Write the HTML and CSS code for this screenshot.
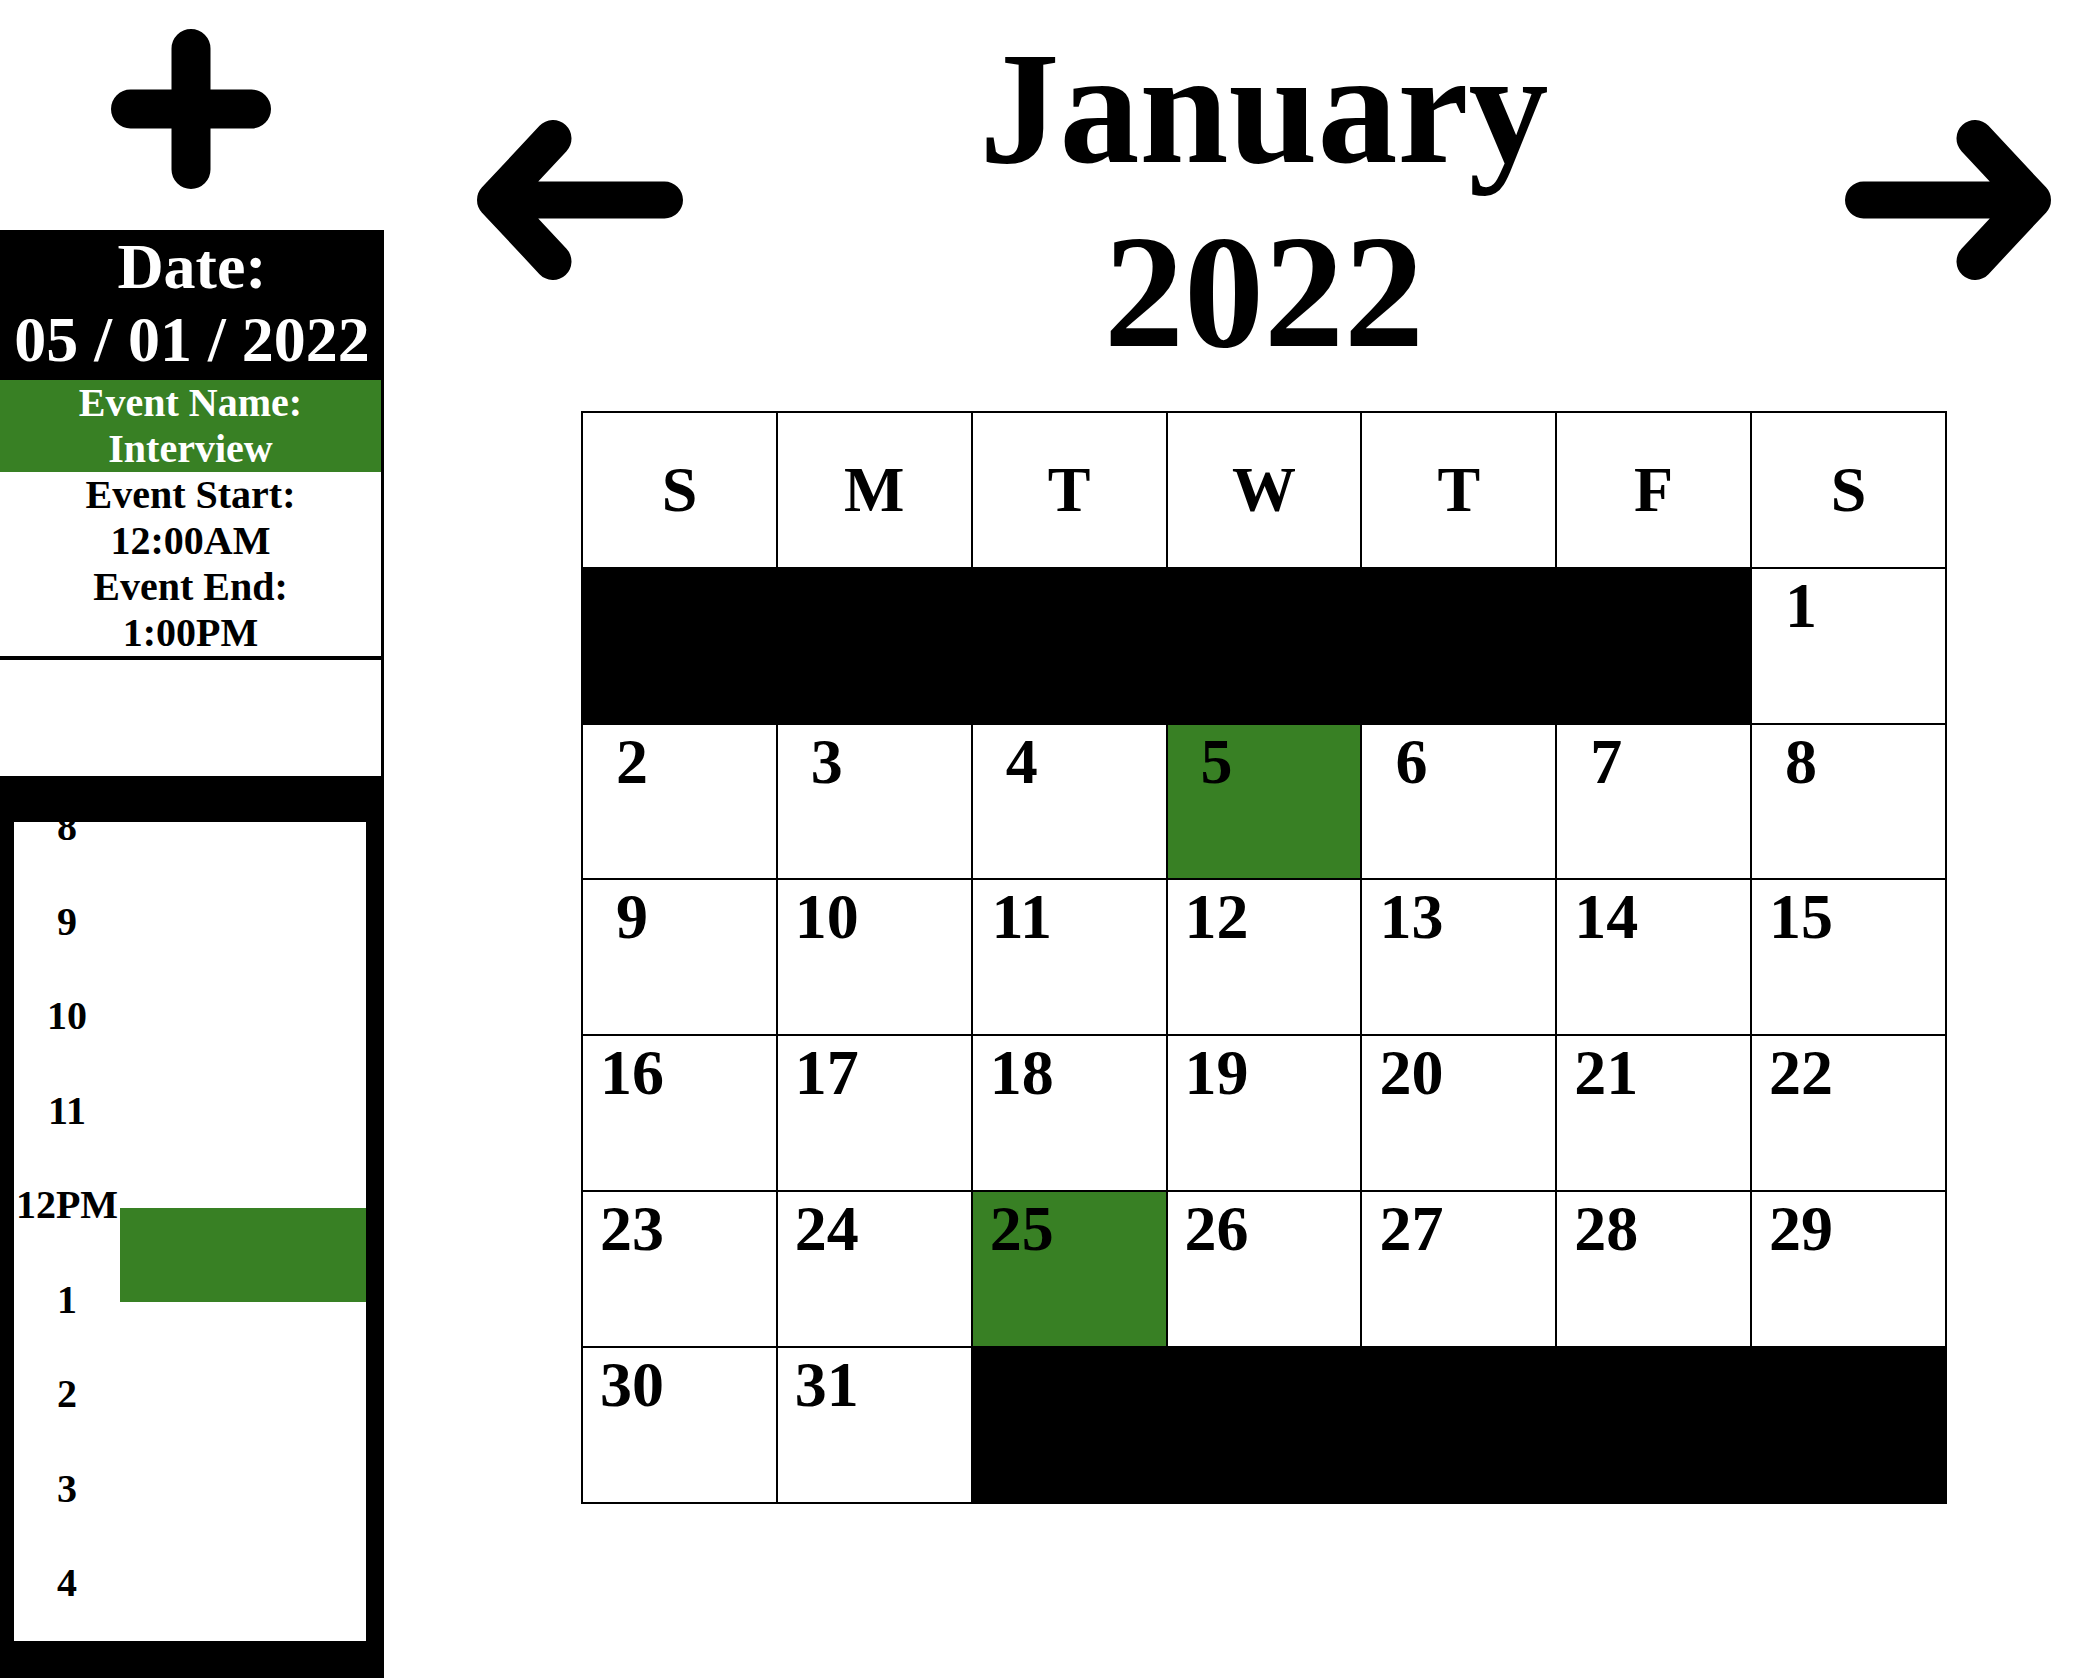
FILE: index.html
```html
<!DOCTYPE html>
<html lang="en">
<head>
  <meta charset="UTF-8">
  <meta name="viewport" content="width=device-width, initial-scale=1.0">
  <title>Calendar</title>
  <link rel="stylesheet" href="styles.css">
</head>
<body>

  <div class="sidebar">
    <div class="add-area">
      <button class="icon-button add-button" title="Add event">
        <svg width="160" height="160" viewBox="0 0 160 160">
          <path d="M19.5 80 H140.5 M80 19.5 V140.5" />
        </svg>
      </button>
    </div>

    <div class="date-head">
      <div>Date:</div>
      <div>05 / 01 / 2022</div>
    </div>

    <div class="event-info">
      <div class="event-name">Event Name:<br>Interview</div>
      <div>Event Start:<br>12:00AM</div>
      <div>Event End:<br>1:00PM</div>
    </div>
    <div class="event-space"></div>

    <div class="schedule">
      <div class="schedule-box">
        <div class="hours">
          <div class="hour"><span>8</span></div>
          <div class="hour"><span>9</span></div>
          <div class="hour"><span>10</span></div>
          <div class="hour"><span>11</span></div>
          <div class="hour"><span>12PM</span><div class="slot-event"></div></div>
          <div class="hour"><span>1</span></div>
          <div class="hour"><span>2</span></div>
          <div class="hour"><span>3</span></div>
          <div class="hour"><span>4</span></div>
        </div>
      </div>
    </div>
  </div>

  <div class="main">
    <div class="month-head">
      <button class="icon-button arrow" title="Previous month">
        <svg width="206" height="160" viewBox="0 0 206 160">
          <path d="M76 18.5 L18.5 80 L76 141.5 M18.5 80 H187.5" />
        </svg>
      </button>
      <h1 class="month-title">January<br>2022</h1>
      <button class="icon-button arrow" title="Next month">
        <svg width="206" height="160" viewBox="0 0 206 160">
          <path d="M130 18.5 L187.5 80 L130 141.5 M187.5 80 H18.5" />
        </svg>
      </button>
    </div>

    <table class="calendar">
      <tr>
        <th>S</th><th>M</th><th>T</th><th>W</th><th>T</th><th>F</th><th>S</th>
      </tr>
      <tr>
        <td class="blank" colspan="6"></td>
        <td><span class="day">1</span></td>
      </tr>
      <tr>
        <td><span class="day">2</span></td>
        <td><span class="day">3</span></td>
        <td><span class="day">4</span></td>
        <td class="has-event"><span class="day">5</span></td>
        <td><span class="day">6</span></td>
        <td><span class="day">7</span></td>
        <td><span class="day">8</span></td>
      </tr>
      <tr>
        <td><span class="day">9</span></td>
        <td><span class="day">10</span></td>
        <td><span class="day">11</span></td>
        <td><span class="day">12</span></td>
        <td><span class="day">13</span></td>
        <td><span class="day">14</span></td>
        <td><span class="day">15</span></td>
      </tr>
      <tr>
        <td><span class="day">16</span></td>
        <td><span class="day">17</span></td>
        <td><span class="day">18</span></td>
        <td><span class="day">19</span></td>
        <td><span class="day">20</span></td>
        <td><span class="day">21</span></td>
        <td><span class="day">22</span></td>
      </tr>
      <tr>
        <td><span class="day">23</span></td>
        <td><span class="day">24</span></td>
        <td class="has-event"><span class="day">25</span></td>
        <td><span class="day">26</span></td>
        <td><span class="day">27</span></td>
        <td><span class="day">28</span></td>
        <td><span class="day">29</span></td>
      </tr>
      <tr>
        <td><span class="day">30</span></td>
        <td><span class="day">31</span></td>
        <td class="blank" colspan="5"></td>
      </tr>
    </table>
  </div>

</body>
</html>
```

FILE: styles.css
```css
body {
  margin: 0;
  font-family: "Liberation Serif", "Times New Roman", serif;
  font-weight: bold;
  background-color: #fff;
  color: #000;
  display: flex;
  min-height: 100vh;
}
.sidebar {
  width: 384px;
  flex-shrink: 0;
  display: flex;
  flex-direction: column;
}
.add-area {
  height: 230px;
  box-sizing: border-box;
  padding: 29px 3px 0 0;
  display: flex;
  justify-content: center;
  align-items: flex-start;
}
.icon-button {
  padding: 0;
  border: none;
  background: none;
  cursor: pointer;
  display: block;
}
.icon-button svg {
  display: block;
}
.icon-button path {
  fill: none;
  stroke: #000;
  stroke-linecap: round;
  stroke-linejoin: round;
}
.add-button path {
  stroke-width: 39;
}
.arrow path {
  stroke-width: 37;
}
.date-head {
  background-color: #000;
  color: #fff;
  font-size: 64px;
  line-height: 73px;
  text-align: center;
  height: 150px;
}
.event-info {
  border-right: 3px solid #000;
  border-bottom: 4px solid #000;
  font-size: 40px;
  line-height: 46px;
  text-align: center;
}
.event-name {
  background-color: #388024;
  color: #fff;
}
.event-space {
  height: 116px;
  border-right: 3px solid #000;
}
.schedule {
  flex: 1;
  background-color: #000;
  padding: 46px 18px 37px 14px;
}
.schedule-box {
  background-color: #fff;
  height: 819px;
  overflow: hidden;
}
.hours {
  margin-top: -18px;
}
.hour {
  height: 94.5px;
  position: relative;
  font-size: 40px;
  line-height: 46px;
}
.hour span {
  display: block;
  width: 106px;
  text-align: center;
}
.slot-event {
  position: absolute;
  left: 106px;
  right: 0;
  top: 25.5px;
  height: 94px;
  background-color: #388024;
}
.main {
  flex: 1;
  padding-left: 56px;
}
.month-head {
  display: flex;
  align-items: center;
  justify-content: space-between;
  padding: 16px 37px 0;
}
.month-title {
  flex: 1;
  margin: 0;
  font-size: 160px;
  line-height: 184px;
  text-align: center;
}
.calendar {
  width: 1366px;
  margin: 27px auto 0;
  border-collapse: collapse;
  table-layout: fixed;
}
.calendar th, .calendar td {
  border: 2px solid #000;
  height: 153.8px;
  padding: 0;
  font-size: 64px;
  line-height: 73px;
}
.calendar th {
  text-align: center;
  vertical-align: middle;
}
.calendar td {
  vertical-align: top;
}
.calendar .day {
  display: block;
  width: 98px;
  text-align: center;
}
.calendar .blank {
  background-color: #000;
}
.calendar .has-event {
  background-color: #388024;
}
```
